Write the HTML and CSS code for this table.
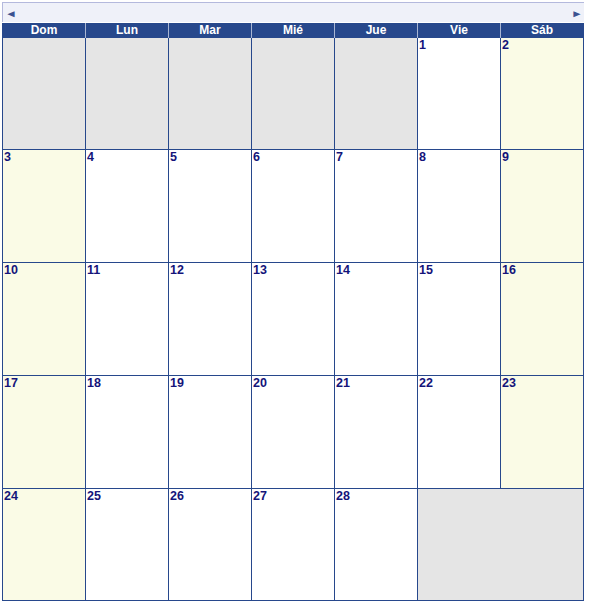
FILE: index.html
```html
<!DOCTYPE html>
<html lang="es">
<head>
<meta charset="utf-8">
<title>Calendario</title>
<link rel="stylesheet" href="styles.css">
</head>
<body>
<div class="wrap">
  <div class="nav">
    <span class="arrow">&#9668;</span>
    <span class="arrow">&#9658;</span>
  </div>
  <div class="head">
    <div>Dom</div><div>Lun</div><div>Mar</div><div>Mié</div><div>Jue</div><div>Vie</div><div>Sáb</div>
  </div>
  <div class="grid">
    <div class="c off"></div><div class="c off"></div><div class="c off"></div><div class="c off"></div><div class="c off"></div><div class="c">1</div><div class="c we">2</div>
    <div class="c we">3</div><div class="c">4</div><div class="c">5</div><div class="c">6</div><div class="c">7</div><div class="c">8</div><div class="c we">9</div>
    <div class="c we">10</div><div class="c">11</div><div class="c">12</div><div class="c">13</div><div class="c">14</div><div class="c">15</div><div class="c we">16</div>
    <div class="c we">17</div><div class="c">18</div><div class="c">19</div><div class="c">20</div><div class="c">21</div><div class="c">22</div><div class="c we">23</div>
    <div class="c we">24</div><div class="c">25</div><div class="c">26</div><div class="c">27</div><div class="c">28</div><div class="c off span2"></div>
  </div>
  <div class="grip"></div>
</div>
</body>
</html>
```
FILE: styles.css
```css
html, body {
  margin: 0;
  padding: 0;
  background: #ffffff;
}
body {
  font-family: "Liberation Sans", Arial, sans-serif;
}
.wrap {
  position: relative;
  padding: 2px 0 0 2px;
  width: 582px;
}
.nav {
  height: 20px;
  box-sizing: border-box;
  border-top: 1px solid #b4b9dd;
  border-left: 1px solid #b4b9dd;
  background: #eff1f9;
  display: flex;
  justify-content: space-between;
  align-items: flex-end;
  padding: 0 2px 3px 3px;
}
.arrow {
  font-size: 10px;
  line-height: 10px;
  color: #3b5290;
  transform: scaleX(1.2);
}
.head {
  display: grid;
  grid-template-columns: repeat(7, 82px);
  column-gap: 1px;
  background: #a9b6d3;
  border-left: 1px solid #27488c;
  border-right: 1px solid #27488c;
  height: 15px;
  margin-top: 1px;
}
.head div {
  background: #27488c;
  color: #ffffff;
  font-weight: bold;
  font-size: 12px;
  line-height: 15px;
  text-align: center;
}
.grid {
  display: grid;
  grid-template-columns: repeat(7, 82px);
  grid-template-rows: 111px 112px 112px 112px 111px;
  gap: 1px;
  background: #27488c;
  border: 1px solid #27488c;
  border-top: 0;
}
.c {
  background: #ffffff;
  color: #14147a;
  font-weight: bold;
  font-size: 12.5px;
  line-height: 14px;
  padding: 0 0 0 1px;
}
.c.we {
  background: #fafbe6;
}
.c.off {
  background: #e5e5e5;
}
.span2 {
  grid-column: span 2;
}
.grip {
  position: absolute;
  left: 583px;
  top: 601px;
  width: 5px;
  height: 5px;
  border: 1px solid #9a9a9a;
  border-bottom: 0;
  background: #ffffff;
}
```
